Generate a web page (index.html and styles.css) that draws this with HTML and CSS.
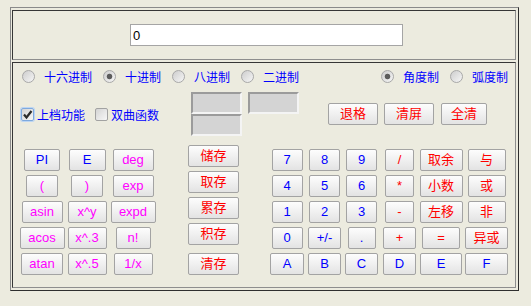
FILE: index.html
```html
<!DOCTYPE html>
<html lang="zh-CN">
<head>
    <meta charset="UTF-8">
    <title>科学计算器</title>
    <link rel="stylesheet" href="styles.css">
</head>
<body>
    <div class="calc">
        <div class="cell screen">
            <input class="display" type="text" value="0">
        </div>
        <div class="cell panel">
            <div class="modes">
                <label class="opt"><input class="radio" type="radio" name="base">十六进制</label>
                <label class="opt"><input class="radio" type="radio" name="base" checked>十进制</label>
                <label class="opt"><input class="radio" type="radio" name="base">八进制</label>
                <label class="opt"><input class="radio" type="radio" name="base">二进制</label>
                <div class="angles">
                    <label class="opt"><input class="radio" type="radio" name="angle" checked>角度制</label>
                    <label class="opt"><input class="radio" type="radio" name="angle">弧度制</label>
                </div>
            </div>
            <div class="tools">
                <label class="chk">
                    <span class="box on"><svg width="11" height="11" viewBox="0 0 11 11"><path d="M2 5.5 L4.5 8.5 L9.5 2" fill="none" stroke="#2b2b2b" stroke-width="2.2"/></svg></span>上档功能
                </label>
                <label class="chk second"><span class="box"></span>双曲函数</label>
                <div class="wells">
                    <div class="stack">
                        <span class="well"></span>
                        <span class="well"></span>
                    </div>
                    <span class="well"></span>
                </div>
                <div class="clears">
                    <button class="key red w50">退格</button>
                    <button class="key red w50">清屏</button>
                    <button class="key red w46 last">全清</button>
                </div>
            </div>
            <div class="keys">
                <div class="pad fn">
                    <button class="key blue w36">PI</button>
                    <button class="key blue w37">E</button>
                    <button class="key pink w41">deg</button>
                    <button class="key pink w32">(</button>
                    <button class="key pink w32">)</button>
                    <button class="key pink w41">exp</button>
                    <button class="key pink w41">asin</button>
                    <button class="key pink w39">x^y</button>
                    <button class="key pink w45">expd</button>
                    <button class="key pink w45">acos</button>
                    <button class="key pink w39">x^.3</button>
                    <button class="key pink w35">n!</button>
                    <button class="key pink w42">atan</button>
                    <button class="key pink w39">x^.5</button>
                    <button class="key pink w39">1/x</button>
                </div>
                <div class="memory">
                    <button class="key red w51">储存</button>
                    <button class="key red w51">取存</button>
                    <button class="key red w51">累存</button>
                    <button class="key red w51">积存</button>
                    <button class="key red w51 clear">清存</button>
                </div>
                <div class="pad num">
                    <button class="key blue w31">7</button>
                    <button class="key blue w31">8</button>
                    <button class="key blue w31">9</button>
                    <button class="key red w29">/</button>
                    <button class="key red w43">取余</button>
                    <button class="key red w38">与</button>

                    <button class="key blue w31">4</button>
                    <button class="key blue w31">5</button>
                    <button class="key blue w31">6</button>
                    <button class="key red w29">*</button>
                    <button class="key red w43">小数</button>
                    <button class="key red w38">或</button>

                    <button class="key blue w31">1</button>
                    <button class="key blue w31">2</button>
                    <button class="key blue w31">3</button>
                    <button class="key red w29">-</button>
                    <button class="key red w43">左移</button>
                    <button class="key red w38">非</button>

                    <button class="key blue w31">0</button>
                    <button class="key blue w33">+/-</button>
                    <button class="key blue w28">.</button>
                    <button class="key red w33">+</button>
                    <button class="key red w38">=</button>
                    <button class="key red w43">异或</button>

                    <button class="key blue w34">A</button>
                    <button class="key blue w33">B</button>
                    <button class="key blue w33">C</button>
                    <button class="key blue w33">D</button>
                    <button class="key blue w42">E</button>
                    <button class="key blue w43">F</button>
                </div>
            </div>
        </div>
    </div>
</body>
</html>
```

FILE: styles.css
```css
body {
    margin: 0;
    background-color: #ecebdf;
    font-family: "Liberation Sans", "Noto Sans CJK SC", sans-serif;
}

.calc {
    width: 509px;
    box-sizing: border-box;
    margin: 7px 0 0 10px;
    padding: 2px 2px 2px 1px;
    border: 1px solid;
    border-color: #8a8a8a #2e2e2e #2e2e2e #8a8a8a;
}

.cell {
    border: 1px solid;
    border-color: #363636 #8e8e8e #8e8e8e #363636;
}

/* top row: the number display */
.screen {
    height: 48px;
    display: flex;
    align-items: center;
    padding-left: 117px;
}

.display {
    width: 273px;
    height: 22px;
    box-sizing: border-box;
    margin: 0;
    padding: 0 2px;
    border: 1px solid #a5a5a5;
    background-color: #fff;
    color: #000;
    font-family: "Liberation Sans", sans-serif;
    font-size: 13px;
    outline: none;
}

.panel {
    margin-top: 2px;
    padding: 6px 0 12px;
}

/* radio rows */
.modes {
    display: flex;
    align-items: center;
    height: 15px;
    padding: 0 7px 0 9px;
}

.opt {
    display: flex;
    align-items: center;
    gap: 9px;
    margin-right: 11px;
    color: #00f;
    font-family: "Noto Sans CJK SC", sans-serif;
    font-size: 12px;
}

.angles {
    display: flex;
    margin-left: auto;
}

.angles .opt:last-child {
    margin-right: 0;
}

.radio {
    appearance: none;
    width: 13px;
    height: 13px;
    margin: 0;
    box-sizing: border-box;
    border: 1px solid #a8a8a8;
    border-radius: 50%;
    background: linear-gradient(135deg, #cdcdcd, #f6f6f6);
}

.radio:checked {
    background: radial-gradient(circle, #5c5c5c 0 2.4px, transparent 3.2px),
        linear-gradient(135deg, #cdcdcd, #f6f6f6);
}

/* second row: options, memory wells, clear keys */
.tools {
    display: flex;
    align-items: center;
    height: 44px;
    margin-top: 8px;
    padding-left: 8px;
}

.chk {
    display: flex;
    align-items: center;
    gap: 3px;
    color: #00f;
    font-family: "Noto Sans CJK SC", sans-serif;
    font-size: 12px;
}

.chk.second {
    margin-left: 10px;
}

.box {
    width: 13px;
    height: 13px;
    box-sizing: border-box;
    display: flex;
    align-items: center;
    justify-content: center;
    border: 1px solid #a2a2a2;
    border-radius: 2px;
    background: linear-gradient(135deg, #d4d4d4, #f7f7f7);
}

.box.on {
    border-color: #7ea9de;
    box-shadow: 0 0 0 1px #bcd5f3;
}

.wells {
    display: flex;
    align-items: flex-start;
    gap: 6px;
    margin-left: 32px;
}

.stack {
    display: flex;
    flex-direction: column;
}

.well {
    display: block;
    width: 51px;
    height: 22px;
    box-sizing: border-box;
    border: 2px solid;
    border-color: #9b9b9b #f4f4f4 #f4f4f4 #9b9b9b;
    background-color: #d4d4d4;
}

.clears {
    display: flex;
    gap: 6px;
    margin-left: 29px;
}

.clears .last {
    margin-left: 1px;
}

/* keypads */
.keys {
    display: flex;
    align-items: flex-end;
    margin-top: 9px;
    padding-left: 6px;
}

.pad {
    display: grid;
    grid-auto-rows: 22px;
    row-gap: 4px;
    justify-items: center;
}

.fn {
    grid-template-columns: 46px 44px 48px;
}

.num {
    grid-template-columns: 38px 37px 37px 39px 44px 47px;
    margin-left: 29px;
}

.memory {
    display: flex;
    flex-direction: column;
    gap: 4px;
    margin-left: 31px;
}

.memory .clear {
    margin-top: 4px;
}

.key {
    height: 22px;
    box-sizing: border-box;
    padding: 0;
    border: 1px solid #a3a3a3;
    border-radius: 2px;
    background: linear-gradient(#fdfdfd, #e3e3e3);
    font-family: "Liberation Sans", "Noto Sans CJK SC", sans-serif;
    font-size: 13px;
    line-height: 20px;
}

.blue { color: #00f; }
.pink { color: #f0f; }
.red { color: #f00; }

.w28 { width: 28px; }
.w29 { width: 29px; }
.w31 { width: 31px; }
.w32 { width: 32px; }
.w33 { width: 33px; }
.w34 { width: 34px; }
.w35 { width: 35px; }
.w36 { width: 36px; }
.w37 { width: 37px; }
.w38 { width: 38px; }
.w39 { width: 39px; }
.w41 { width: 41px; }
.w42 { width: 42px; }
.w43 { width: 43px; }
.w45 { width: 45px; }
.w46 { width: 46px; }
.w50 { width: 50px; }
.w51 { width: 51px; }
```
